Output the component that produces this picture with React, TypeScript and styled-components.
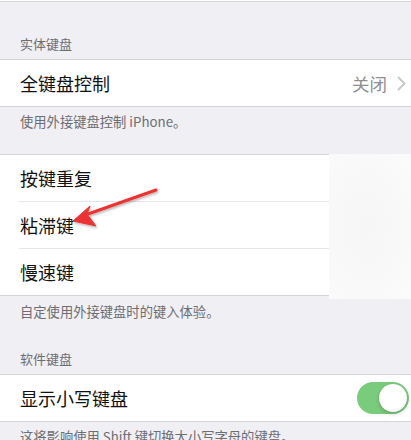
import React from "react";
import styled, { createGlobalStyle } from "styled-components";

const Global = createGlobalStyle`
  html, body { margin: 0; padding: 0; background: #efeff4; }
  body { font-family: "Noto Sans CJK SC", "Noto Sans", sans-serif; -webkit-font-smoothing: antialiased; }
  * { box-sizing: border-box; }
`;

const Page = styled.div`
  position: relative;
  width: 411px;
  height: 440px;
  overflow: hidden;
  background: #efeff4;
`;

const TopEdge = styled.div`
  height: 1px;
  background: #fff;
  border-bottom: 1px solid #d4d4d8;
  box-sizing: content-box;
`;

const SectionHeader = styled.div<{ $h: number }>`
  height: ${(p) => p.$h}px;
  display: flex;
  align-items: flex-end;
  padding: 0 20px 7px;
  font-size: 13px;
  line-height: 16px;
  color: #6d6d72;
`;

const SectionFooter = styled.div<{ $top: number; $bottom: number }>`
  padding: ${(p) => p.$top}px 20px 0;
  margin-bottom: ${(p) => p.$bottom}px;
  font-size: 13.3px;
  line-height: 16px;
  color: #6d6d72;
  white-space: nowrap;
`;

const Group = styled.div`
  background: #fff;
  border-top: 1px solid #d4d4d8;
  border-bottom: 1px solid #d4d4d8;
`;

const Row = styled.div`
  height: 46px;
  display: flex;
  align-items: center;
  padding: 0 2px 0 20px;
`;

const Label = styled.span`
  flex: 1;
  font-size: 18px;
  color: #111;
  line-height: 22px;
`;

const Value = styled.span`
  font-size: 17.5px;
  color: #8e8e93;
  margin-right: 10px;
`;

const Divider = styled.div`
  height: 1px;
  margin-left: 19px;
  background: #e6e6ea;
`;

const Chevron = styled.svg`
  width: 9px;
  height: 15px;
  margin-right: 3px;
`;

const Toggle = styled.div`
  position: relative;
  width: 52px;
  height: 32px;
  border-radius: 16px;
  background: #79cc7b;
`;

const Knob = styled.div`
  position: absolute;
  top: 2px;
  right: 2px;
  width: 28px;
  height: 28px;
  border-radius: 50%;
  background: #fff;
  box-shadow: 0 2px 4px rgba(0, 0, 0, 0.18), 0 0 1px rgba(0, 0, 0, 0.2);
`;

const Veil = styled.div`
  position: absolute;
  left: 329px;
  top: 154px;
  width: 82px;
  height: 145px;
  background: radial-gradient(ellipse at 45% 50%, #f6f6f6 0%, #f8f8f8 50%, #fbfbfb 100%);
`;

const Arrow = styled.svg`
  position: absolute;
  left: 60px;
  top: 180px;
  width: 110px;
  height: 60px;
  overflow: visible;
`;

export default function App() {
  return (
    <>
      <Global />
      <Page>
        <TopEdge />
        <SectionHeader $h={57}>实体键盘</SectionHeader>
        <Group>
          <Row>
            <Label>全键盘控制</Label>
            <Value>关闭</Value>
            <Chevron viewBox="0 0 9 15">
              <path d="M1.5 1.5 L7.5 7.5 L1.5 13.5" fill="none" stroke="#c7c7cc" strokeWidth="1.8" strokeLinecap="round" strokeLinejoin="round" />
            </Chevron>
          </Row>
        </Group>
        <SectionFooter $top={7} $bottom={24}>使用外接键盘控制 iPhone。</SectionFooter>
        <Group>
          <Row>
            <Label>按键重复</Label>
          </Row>
          <Divider />
          <Row>
            <Label>粘滞键</Label>
          </Row>
          <Divider />
          <Row>
            <Label>慢速键</Label>
          </Row>
        </Group>
        <SectionFooter $top={8} $bottom={0}>自定使用外接键盘时的键入体验。</SectionFooter>
        <SectionHeader $h={54}>软件键盘</SectionHeader>
        <Group>
          <Row>
            <Label>显示小写键盘</Label>
            <Toggle>
              <Knob />
            </Toggle>
          </Row>
        </Group>
        <SectionFooter $top={7} $bottom={0}>这将影响使用 Shift 键切换大小写字母的键盘。</SectionFooter>
        <Veil />
        <Arrow viewBox="60 180 110 60">
          <defs>
            <filter id="sh" x="-20%" y="-20%" width="140%" height="140%">
              <feDropShadow dx="1" dy="1.5" stdDeviation="1.2" floodColor="#000" floodOpacity="0.3" />
            </filter>
          </defs>
          <g filter="url(#sh)">
            <path d="M156 190 L88 214" stroke="#ec3330" strokeWidth="3" strokeLinecap="round" fill="none" />
            <path d="M73 221 L90 206 L87 214 L96 226 Z" fill="#ec3330" stroke="#ec3330" strokeWidth="1" strokeLinejoin="round" />
          </g>
        </Arrow>
      </Page>
    </>
  );
}
